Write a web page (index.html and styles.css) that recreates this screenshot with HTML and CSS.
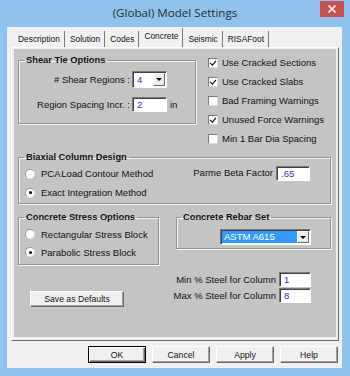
FILE: index.html
```html
<!DOCTYPE html>
<html lang="en">
<head>
    <meta charset="UTF-8">
    <meta name="viewport" content="width=device-width, initial-scale=1.0">
    <title>(Global) Model Settings</title>
    <link rel="stylesheet" href="styles.css">
</head>
<body>
    <div class="window">
        <div class="titlebar">
            <span class="title">(Global) Model Settings</span>
            <span class="close">
                <svg width="10" height="10" viewBox="0 0 10 10"><path d="M1.5 1.5 L8.5 8.5 M8.5 1.5 L1.5 8.5" stroke="#fff" stroke-width="1.6" fill="none"/></svg>
            </span>
        </div>

        <div class="client">
            <div class="tabs">
                <div class="tab">Description</div>
                <div class="tab">Solution</div>
                <div class="tab">Codes</div>
                <div class="tab active">Concrete</div>
                <div class="tab">Seismic</div>
                <div class="tab">RISAFoot</div>
            </div>

            <div class="page">
                <div class="sheet">
                    <div class="top-row">
                        <fieldset class="group shear">
                            <legend>Shear Tie Options</legend>
                            <div class="shear-grid">
                                <span class="label">#&nbsp;Shear Regions :</span>
                                <div class="combo small">
                                    <span class="value">4</span>
                                    <span class="arrow"><i></i></span>
                                </div>
                                <span></span>
                                <span class="label">Region Spacing Incr. :</span>
                                <div class="box">2</div>
                                <span class="unit">in</span>
                            </div>
                        </fieldset>

                        <div class="checks">
                            <div class="check"><span class="cb on"></span>Use Cracked Sections</div>
                            <div class="check"><span class="cb on"></span>Use Cracked Slabs</div>
                            <div class="check"><span class="cb"></span>Bad Framing Warnings</div>
                            <div class="check"><span class="cb on"></span>Unused Force Warnings</div>
                            <div class="check"><span class="cb"></span>Min 1 Bar Dia Spacing</div>
                        </div>
                    </div>

                    <fieldset class="group biaxial">
                        <legend>Biaxial Column Design</legend>
                        <div class="biaxial-body">
                            <div class="radios">
                                <div class="radio-row"><span class="rb"></span>PCA&#8202;Load Contour Method</div>
                                <div class="radio-row"><span class="rb on"></span>Exact Integration Method</div>
                            </div>
                            <div class="parme">
                                <span class="parme-label">Parme Beta Factor</span>
                                <div class="box parme-box">.65</div>
                            </div>
                        </div>
                    </fieldset>

                    <div class="mid-row">
                        <fieldset class="group stress">
                            <legend>Concrete Stress Options</legend>
                            <div class="radios">
                                <div class="radio-row short"><span class="rb"></span>Rectangular Stress Block</div>
                                <div class="radio-row short"><span class="rb on"></span>Parabolic Stress Block</div>
                            </div>
                        </fieldset>

                        <fieldset class="group rebar">
                            <legend>Concrete Rebar Set</legend>
                            <div class="combo rebar-combo">
                                <span class="value picked">ASTM A615</span>
                                <span class="arrow"><i></i></span>
                            </div>
                        </fieldset>
                    </div>

                    <div class="bottom-row">
                        <div class="btn save">Save as Defaults</div>
                        <div class="steel">
                            <div class="steel-row">
                                <span class="label">Min % Steel for Column</span>
                                <div class="box steel-box">1</div>
                            </div>
                            <div class="steel-row">
                                <span class="label">Max % Steel for Column</span>
                                <div class="box steel-box">8</div>
                            </div>
                        </div>
                    </div>
                </div>
            </div>

            <div class="buttons">
                <div class="btn default">OK</div>
                <div class="btn">Cancel</div>
                <div class="btn">Apply</div>
                <div class="btn">Help</div>
            </div>
        </div>
    </div>
</body>
</html>
```

FILE: styles.css
```css
body { margin: 0; padding: 0; font-family: "Liberation Sans", Arial, sans-serif; color: #111; }
.window { width: 350px; height: 376px; background: #8fc3ee; overflow: hidden; }
.titlebar { height: 27px; display: grid; grid-template-columns: 1fr auto 1fr; align-items: start; }
.title { grid-column: 2; font-family: "Open Sans", "Noto Sans", sans-serif; font-size: 11.6px; line-height: 26px; color: #2b2b2b; }
.close { grid-column: 3; justify-self: end; width: 24px; height: 16px; margin: 1px 6px 0 0; background: #c75050; display: flex; align-items: center; justify-content: center; }
.close svg { display: block; }

.client { margin: 0 8px 0 7px; height: 341px; background: #f0f0f0; padding-top: 1px; box-sizing: border-box; }

/* tab strip */
.tabs { display: flex; align-items: flex-end; height: 19px; padding-left: 6px; }
.tab { height: 16px; line-height: 16px; padding: 0 4px 0 5px; font-size: 8.4px; border-right: 1px solid #7a7a7a; color: #111; }
.tab.active { height: 19px; line-height: 17px; }

.page { margin: 0 3px 0 4px; height: 294px; box-sizing: border-box; border: 1px solid; border-color: #fff #696969 #696969 #fff; padding: 1px 2px 3px 2px; }
.sheet { height: 100%; box-sizing: border-box; background: #c4c4c4; padding: 4px 5px 0 4px; font-size: 9.5px; }

/* group boxes */
.group { margin: 0; padding: 0; min-width: 0; box-sizing: border-box; border: 1px solid #939393; box-shadow: inset 1px 1px 0 #f4f4f4, 1px 1px 0 #f4f4f4; }
.group legend { font-weight: bold; font-size: 9.3px; line-height: 12px; padding: 0 2px; margin-left: 5px; color: #111; }

.top-row { display: flex; align-items: flex-start; }
.shear { width: 178px; height: 70px; margin-top: 1px; padding-top: 5px; }
.shear-grid { display: grid; grid-template-columns: 111px 35px auto; grid-template-rows: 17px 15px; column-gap: 2px; row-gap: 9px; align-items: center; }
.label { text-align: right; white-space: nowrap; }
.unit { margin-left: 1px; }

.checks { margin-left: 12px; display: flex; flex-direction: column; }
.check { height: 19px; display: flex; align-items: center; gap: 4px; white-space: nowrap; }
.cb { width: 10px; height: 10px; box-sizing: border-box; background: #fff; border: 1px solid; border-color: #7a7a7a #dcdcdc #dcdcdc #7a7a7a; position: relative; }
.cb.on::after { content: ""; position: absolute; left: 2px; top: 0px; width: 2.5px; height: 5px; border: solid #000; border-width: 0 1.6px 1.6px 0; transform: rotate(40deg); }

.biaxial { width: 313px; height: 53px; margin-top: 3px; padding-top: 1px; }
.biaxial-body { display: flex; }
.radios { display: flex; flex-direction: column; padding-left: 6px; }
.radio-row { height: 19px; display: flex; align-items: center; gap: 6px; white-space: nowrap; }
.radio-row.short { height: 18px; }
.rb { width: 10px; height: 10px; box-sizing: border-box; border-radius: 50%; background: #fff; border: 1px solid #9a9a9a; border-right-color: #e4e4e4; border-bottom-color: #e4e4e4; display: flex; align-items: center; justify-content: center; }
.rb.on::after { content: ""; width: 3px; height: 3px; border-radius: 50%; background: #000; }

.parme { margin-left: auto; margin-right: 20px; margin-top: 2px; display: flex; align-items: flex-start; gap: 3px; }
.parme-label { line-height: 13px; }
.parme-box { width: 34px; height: 16px; }

.mid-row { display: flex; align-items: flex-start; margin-top: 7px; }
.stress { width: 141px; height: 54px; padding-top: 2px; }
.rebar { width: 155px; height: 38px; margin-left: 17px; padding-top: 6px; }
.rebar legend { margin-left: 4px; }
.rebar-combo { width: 91px; height: 16px; margin-left: 43px; }

/* inputs */
.box { box-sizing: border-box; height: 15px; background: #fff; border: 1px solid; border-color: #7a7a7a #fff #fff #7a7a7a; box-shadow: inset 1px 1px 0 #404040; color: #3333b0; padding-left: 4px; line-height: 13px; font-size: 9.5px; }
.combo { box-sizing: border-box; display: flex; background: #fff; border: 1px solid; border-color: #7a7a7a #fff #fff #7a7a7a; box-shadow: inset 1px 1px 0 #404040; padding: 1px 1px 1px 1px; }
.combo.small { height: 17px; }
.combo .value { flex: 1; color: #3333b0; padding-left: 3px; line-height: 13px; }
.combo .value.picked { background: #3399ff; color: #fff; padding-left: 2px; line-height: 12px; }
.arrow { width: 12px; box-sizing: border-box; background: #ececec; border: 1px solid; border-color: #fff #696969 #696969 #fff; display: flex; align-items: center; justify-content: center; }
.arrow i { width: 0; height: 0; border-left: 3px solid transparent; border-right: 3px solid transparent; border-top: 3px solid #000; }

.bottom-row { display: flex; align-items: flex-start; margin-top: 7px; }
.save { width: 94px; height: 16px; margin-left: 12px; margin-top: 19px; background: #ececec; font-size: 8.9px; }
.steel { margin-left: auto; margin-right: 20px; display: flex; flex-direction: column; gap: 1px; }
.steel-row { height: 15px; display: flex; align-items: center; justify-content: flex-end; gap: 3px; }
.steel-box { width: 32px; }

/* buttons */
.btn { box-sizing: border-box; display: flex; align-items: center; justify-content: center; border: 1px solid; border-color: #fff #696969 #696969 #fff; box-shadow: inset -1px -1px 0 #a0a0a0; background: #f0f0f0; font-size: 8.7px; color: #111; }
.buttons { display: flex; justify-content: flex-end; gap: 6px; margin: 5px 4px 0 0; }
.buttons .btn { width: 58px; height: 17px; }
.btn.default { border-color: #000; box-shadow: inset 1px 1px 0 #fff, inset -1px -1px 0 #696969, inset -2px -2px 0 #a0a0a0; }
```
